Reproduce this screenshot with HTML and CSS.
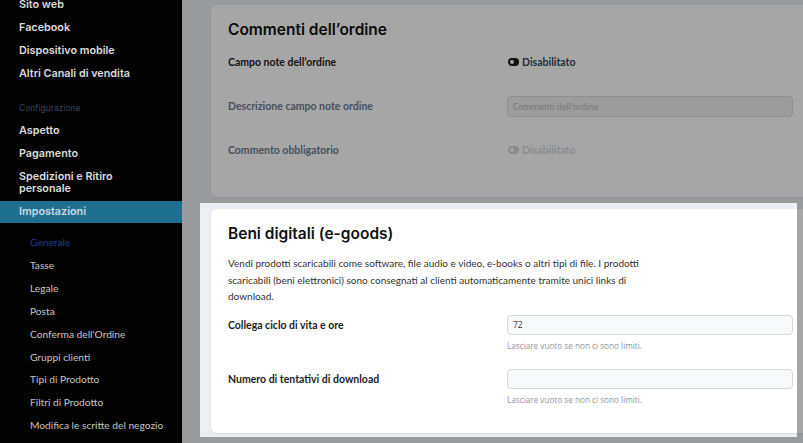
FILE: index.html
```html
<!DOCTYPE html>
<html lang="it">
<head>
  <meta charset="UTF-8" />
  <meta name="viewport" content="width=device-width, initial-scale=1.0"/>
  <title>Impostazioni - Generale</title>
  <link rel="stylesheet" href="styles.css">
</head>
<body>
  <div class="layout">
    <!-- Sidebar -->
    <aside class="sidebar">
      <ul class="nav">
        <li>Sito web</li>
        <li>Facebook</li>
        <li>Dispositivo mobile</li>
        <li>Altri Canali di vendita</li>
      </ul>
      <p class="nav-title">Configurazione</p>
      <ul class="nav">
        <li>Aspetto</li>
        <li>Pagamento</li>
        <li>Spedizioni e Ritiro<br>personale</li>
        <li class="active">Impostazioni</li>
      </ul>
      <ul class="subnav">
        <li class="current">Generale</li>
        <li>Tasse</li>
        <li>Legale</li>
        <li>Posta</li>
        <li>Conferma dell'Ordine</li>
        <li>Gruppi clienti</li>
        <li>Tipi di Prodotto</li>
        <li>Filtri di Prodotto</li>
        <li>Modifica le scritte del negozio</li>
      </ul>
    </aside>

    <main class="content">
      <!-- Commenti -->
      <section class="card card-comments">
        <h2>Commenti dell’ordine</h2>
        <div class="row">
          <div class="label">Campo note dell’ordine</div>
          <div class="toggle">
            <svg width="11" height="8" viewBox="0 0 11 8"><rect x="0" y="0" width="11" height="8" rx="4" fill="currentColor"/><circle cx="4" cy="4" r="2" fill="#fff"/></svg>
            Disabilitato
          </div>
        </div>
        <div class="row">
          <div class="label muted">Descrizione campo note ordine</div>
          <input class="field field-disabled" type="text" placeholder="Commenti dell'ordine" disabled />
        </div>
        <div class="row">
          <div class="label muted">Commento obbligatorio</div>
          <div class="toggle toggle-off">
            <svg width="11" height="8" viewBox="0 0 11 8"><rect x="0" y="0" width="11" height="8" rx="4" fill="currentColor"/><circle cx="4" cy="4" r="2" fill="#fff"/></svg>
            Disabilitato
          </div>
        </div>
      </section>

      <!-- Beni digitali -->
      <section class="card card-egoods">
        <h2>Beni digitali (e-goods)</h2>
        <p class="intro">Vendi prodotti scaricabili come software, file audio e video, e-books o altri tipi di file. I prodotti scaricabili (beni elettronici) sono consegnati al clienti automaticamente tramite unici links di download.</p>
        <div class="form-row">
          <label class="label" for="lifetime">Collega ciclo di vita e ore</label>
          <div>
            <input class="field" id="lifetime" type="text" value="72" />
            <p class="help">Lasciare vuoto se non ci sono limiti.</p>
          </div>
        </div>
        <div class="form-row">
          <label class="label" for="attempts">Numero di tentativi di download</label>
          <div>
            <input class="field" id="attempts" type="text" />
            <p class="help">Lasciare vuoto se non ci sono limiti.</p>
          </div>
        </div>
      </section>

      <!-- tour highlight -->
      <div class="spotlight"></div>
    </main>
  </div>
</body>
</html>
```

FILE: styles.css
```css
* {
  box-sizing: border-box;
}

body {
  margin: 0;
  height: 100vh;
  overflow: hidden;
  background-color: #ebeef2;
  font-family: 'Lato', sans-serif;
}

.layout {
  display: flex;
  height: 100vh;
}

/* Sidebar */
.sidebar {
  width: 182px;
  flex-shrink: 0;
  background-color: #020202;
  overflow: hidden;
}

.nav, .subnav {
  list-style: none;
  margin: 0;
  padding: 0;
}

.nav:first-child {
  margin-top: -7px;
}

.nav li {
  padding: 5.65px 19px;
  line-height: 12px;
  font-family: 'Inter', sans-serif;
  font-size: 10.8px;
  font-weight: 600;
  color: #dcdcdc;
}

.nav li.active {
  background-color: #1f7090;
  color: #c9d9e0;
  padding-top: 5px;
  padding-bottom: 5px;
}

.nav-title {
  margin: 15px 0 4px;
  padding: 0 19px;
  line-height: 14px;
  font-family: 'Inter', sans-serif;
  font-size: 8.5px;
  color: #34465c;
}

.subnav {
  padding-top: 8px;
}

.subnav li {
  padding: 5px 30px;
  line-height: 12.9px;
  font-size: 10.2px;
  white-space: nowrap;
  color: #c4c4c4;
}

.subnav li.current {
  color: #1d3c8c;
}

/* Main */
.content {
  position: relative;
  flex: 1;
  overflow: hidden;
  padding: 5px 0 0 29px;
  display: flex;
  flex-direction: column;
  gap: 12px;
}

.card {
  width: 599px;
  flex-shrink: 0;
  background-color: #fff;
  border-radius: 6px;
  box-shadow: 0 1px 3px rgba(0, 0, 0, 0.08);
}

.card h2 {
  margin: 0;
  font-family: 'Inter', sans-serif;
  font-size: 15.5px;
  font-weight: 600;
  line-height: 20px;
  color: #111;
}

.card-comments {
  padding: 15px 17px 25px;
}

.row {
  display: grid;
  grid-template-columns: 279px 1fr;
  align-items: center;
  min-height: 44px;
}

.label {
  font-size: 10.5px;
  font-weight: 700;
  color: #1d1d1d;
}

.label.muted {
  color: #6c7b90;
}

.toggle {
  display: flex;
  align-items: center;
  gap: 3px;
  padding-left: 1px;
  font-size: 10.5px;
  font-weight: 700;
  color: #34495e;
}

.toggle svg {
  color: #1a1a1a;
}

.toggle-off,
.toggle-off svg {
  color: #d3d7dc;
}

.field {
  display: block;
  width: 100%;
  height: 20px;
  padding: 0 5px;
  border: 1px solid #d4d8dd;
  border-radius: 4px;
  background-color: #f8f9fb;
  font-family: 'Open Sans', sans-serif;
  font-size: 8.5px;
  color: #333;
}

.field-disabled {
  height: 21px;
  background-color: #f1f1f1;
  border-color: #dcdcdc;
}

.field::placeholder {
  color: #b4b4b4;
}

.card-egoods {
  padding: 15px 17px 26px;
}

.card-egoods h2 {
  margin-bottom: 11px;
}

.intro {
  margin: 0 0 10px;
  max-width: 440px;
  font-size: 10px;
  line-height: 16.5px;
  color: #333;
}

.form-row {
  display: grid;
  grid-template-columns: 279px 1fr;
  margin-bottom: 16px;
}

.form-row:last-child {
  margin-bottom: 0;
}

.form-row .label {
  line-height: 20px;
}

.help {
  margin: 4px 0 0;
  line-height: 14px;
  font-family: 'Open Sans', sans-serif;
  font-size: 8.2px;
  color: #8d96a0;
}

/* guided tour overlay */
.spotlight {
  position: absolute;
  left: 18px;
  top: 203px;
  width: 597px;
  height: 234px;
  box-shadow: 0 0 0 2000px rgba(0, 0, 0, 0.35);
  pointer-events: none;
}
```
